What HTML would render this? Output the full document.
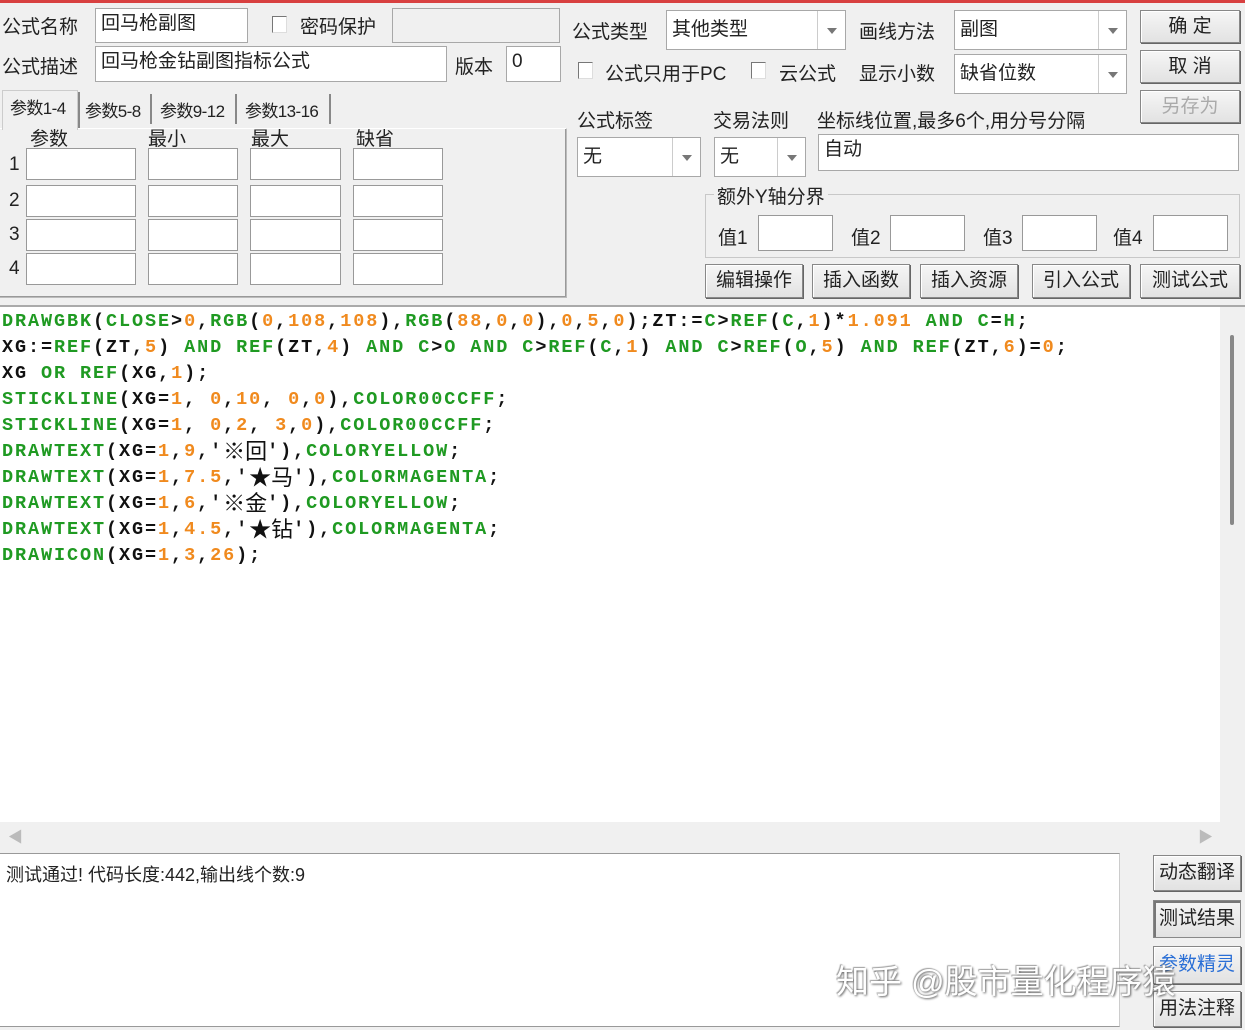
<!DOCTYPE html>
<html><head><meta charset="utf-8"><style>
*{box-sizing:border-box;margin:0;padding:0}
body{width:1245px;height:1030px;background:#f0f0f0;position:relative;overflow:hidden;font-family:"Liberation Sans","Noto Sans CJK SC",sans-serif;font-size:19px;color:#222}
.a{position:absolute;white-space:nowrap}
.in{position:absolute;background:#fff;border:1px solid #a8a8a8;font-size:19px;padding-left:5px;line-height:30px}
.dis{background:#f0f0f0}
.cb{position:absolute;width:15px;height:17px;border:1px solid #777;border-right-color:#ddd;border-bottom-color:#ddd;background:#fff}
.sel{position:absolute;background:#fff;border:1px solid #a8a8a8;font-size:19px;padding-left:5px}
.sel i{position:absolute;right:0;top:0;bottom:0;width:28px;border-left:1px solid #ccc}
.sel i:after{content:"";position:absolute;left:9px;top:50%;margin-top:-2px;border:5px solid transparent;border-top:6px solid #777}
.btn{position:absolute;border:1px solid #888;background:linear-gradient(#f6f6f6,#e2e2e2);box-shadow:inset 1px 1px 0 #fff, 1px 1px 0 #666;text-align:center;font-size:19px}
.pi{position:absolute;background:#fff;border:1px solid #999;width:110px;height:32px}
.code{position:absolute;left:2px;top:309px;font-family:"Liberation Mono",monospace;font-weight:bold;font-size:18.5px;letter-spacing:1.9px;color:#111;white-space:pre}
.code div{height:26px;line-height:26px;overflow:visible}
.g{color:#1f9a22}.o{color:#f08a1e}
.cj{font-family:"Noto Sans CJK SC",sans-serif;font-weight:normal;font-size:22px;letter-spacing:0;color:#111;line-height:20px;display:inline-block;vertical-align:-3px;height:20px}
.tab{position:absolute;top:97px;font-size:17px;letter-spacing:-0.6px}
.sep{position:absolute;top:94px;width:2px;height:30px;background:#888}
</style></head><body>
<div class="a" style="left:0;top:0;width:1245px;height:3px;background:#d84040"></div>
<div class="a" style="left:2px;top:12px">公式名称</div>
<div class="in" style="left:95px;top:8px;width:153px;height:35px">回马枪副图</div>
<div class="cb" style="left:272px;top:16px"></div>
<div class="a" style="left:300px;top:12px">密码保护</div>
<div class="in dis" style="left:392px;top:8px;width:168px;height:35px"></div>
<div class="a" style="left:2px;top:52px">公式描述</div>
<div class="in" style="left:95px;top:46px;width:352px;height:36px">回马枪金钻副图指标公式</div>
<div class="a" style="left:455px;top:52px">版本</div>
<div class="in" style="left:506px;top:46px;width:55px;height:36px">0</div>

<div class="a" style="left:572px;top:17px">公式类型</div>
<div class="sel" style="left:666px;top:10px;width:180px;height:40px;line-height:38px">其他类型<i></i></div>
<div class="a" style="left:859px;top:17px">画线方法</div>
<div class="sel" style="left:954px;top:10px;width:173px;height:40px;line-height:38px">副图<i></i></div>
<div class="cb" style="left:578px;top:62px"></div>
<div class="a" style="left:605px;top:59px">公式只用于PC</div>
<div class="cb" style="left:751px;top:62px"></div>
<div class="a" style="left:779px;top:59px">云公式</div>
<div class="a" style="left:859px;top:59px">显示小数</div>
<div class="sel" style="left:954px;top:54px;width:173px;height:40px;line-height:38px">缺省位数<i></i></div>
<div class="btn" style="left:1140px;top:10px;width:100px;height:33px;line-height:31px">确 定</div>
<div class="btn" style="left:1140px;top:50px;width:100px;height:33px;line-height:31px">取 消</div>
<div class="btn" style="left:1140px;top:90px;width:100px;height:33px;line-height:31px;color:#aaa">另存为</div>

<!-- tabs -->
<div class="a" style="left:0;top:128px;width:567px;height:170px;border:1px solid #bbb;border-left:none;border-top:1px solid #fff;box-shadow:inset -1px -1px 0 #999"></div>
<div class="a" style="left:2px;top:90px;width:76px;height:40px;border:1px solid #ccc;border-bottom:none;background:#f0f0f0"></div>
<div class="tab" style="left:10px;top:94px">参数1-4</div>
<div class="sep" style="left:78px;top:92px;height:36px"></div>
<div class="tab" style="left:85px">参数5-8</div>
<div class="sep" style="left:150px"></div>
<div class="tab" style="left:160px">参数9-12</div>
<div class="sep" style="left:235px"></div>
<div class="tab" style="left:245px">参数13-16</div>
<div class="sep" style="left:329px"></div>
<div class="a" style="left:30px;top:124px">参数</div>
<div class="a" style="left:148px;top:124px">最小</div>
<div class="a" style="left:251px;top:124px">最大</div>
<div class="a" style="left:356px;top:124px">缺省</div>
<div class="a" style="left:9px;top:154px">1</div><div class="a" style="left:9px;top:190px">2</div><div class="a" style="left:9px;top:224px">3</div><div class="a" style="left:9px;top:258px">4</div>
<div class="pi" style="left:26px;top:148px"></div><div class="pi" style="left:148px;top:148px;width:90px"></div><div class="pi" style="left:250px;top:148px;width:91px"></div><div class="pi" style="left:353px;top:148px;width:90px"></div>
<div class="pi" style="left:26px;top:185px"></div><div class="pi" style="left:148px;top:185px;width:90px"></div><div class="pi" style="left:250px;top:185px;width:91px"></div><div class="pi" style="left:353px;top:185px;width:90px"></div>
<div class="pi" style="left:26px;top:219px"></div><div class="pi" style="left:148px;top:219px;width:90px"></div><div class="pi" style="left:250px;top:219px;width:91px"></div><div class="pi" style="left:353px;top:219px;width:90px"></div>
<div class="pi" style="left:26px;top:253px"></div><div class="pi" style="left:148px;top:253px;width:90px"></div><div class="pi" style="left:250px;top:253px;width:91px"></div><div class="pi" style="left:353px;top:253px;width:90px"></div>

<div class="a" style="left:577px;top:106px">公式标签</div>
<div class="sel" style="left:577px;top:137px;width:124px;height:40px;line-height:38px">无<i></i></div>
<div class="a" style="left:713px;top:106px">交易法则</div>
<div class="sel" style="left:714px;top:137px;width:92px;height:40px;line-height:38px">无<i></i></div>
<div class="a" style="left:817px;top:106px">坐标线位置,最多6个,用分号分隔</div>
<div class="in" style="left:818px;top:134px;width:421px;height:37px">自动</div>
<div class="a" style="left:705px;top:194px;width:535px;height:64px;border:1px solid #c8c8c8"></div>
<div class="a" style="left:714px;top:182px;background:#f0f0f0;padding:0 3px">额外Y轴分界</div>
<div class="a" style="left:718px;top:223px">值1</div><div class="pi" style="left:758px;top:215px;width:75px;height:36px"></div>
<div class="a" style="left:851px;top:223px">值2</div><div class="pi" style="left:890px;top:215px;width:75px;height:36px"></div>
<div class="a" style="left:983px;top:223px">值3</div><div class="pi" style="left:1022px;top:215px;width:75px;height:36px"></div>
<div class="a" style="left:1113px;top:223px">值4</div><div class="pi" style="left:1153px;top:215px;width:75px;height:36px"></div>
<div class="btn" style="left:705px;top:264px;width:98px;height:34px;line-height:32px">编辑操作</div>
<div class="btn" style="left:812px;top:264px;width:98px;height:34px;line-height:32px">插入函数</div>
<div class="btn" style="left:920px;top:264px;width:98px;height:34px;line-height:32px">插入资源</div>
<div class="btn" style="left:1032px;top:264px;width:98px;height:34px;line-height:32px">引入公式</div>
<div class="btn" style="left:1140px;top:264px;width:100px;height:34px;line-height:32px">测试公式</div>

<!-- code -->
<div class="a" style="left:0;top:305px;width:1245px;height:2px;background:#aaa"></div>
<div class="a" style="left:0;top:307px;width:1220px;height:515px;background:#fff"></div>
<div class="a" style="left:1230px;top:335px;width:4px;height:190px;background:#888;border-radius:2px"></div>
<div class="a" style="left:0;top:822px;width:1220px;height:27px;background:#f0f0f0"></div>
<div class="a" style="left:8px;top:826px;color:#bbb;font-size:15px">◀</div>
<div class="a" style="left:1198px;top:826px;color:#bbb;font-size:15px">▶</div>
<div class="code"><div><span class="g">DRAWGBK</span>(<span class="g">CLOSE</span>&gt;<span class="o">0</span>,<span class="g">RGB</span>(<span class="o">0</span>,<span class="o">108</span>,<span class="o">108</span>),<span class="g">RGB</span>(<span class="o">88</span>,<span class="o">0</span>,<span class="o">0</span>),<span class="o">0</span>,<span class="o">5</span>,<span class="o">0</span>);ZT:=<span class="g">C</span>&gt;<span class="g">REF</span>(<span class="g">C</span>,<span class="o">1</span>)*<span class="o">1.091</span> <span class="g">AND</span> <span class="g">C</span>=<span class="g">H</span>;</div><div>XG:=<span class="g">REF</span>(ZT,<span class="o">5</span>) <span class="g">AND</span> <span class="g">REF</span>(ZT,<span class="o">4</span>) <span class="g">AND</span> <span class="g">C</span>&gt;<span class="g">O</span> <span class="g">AND</span> <span class="g">C</span>&gt;<span class="g">REF</span>(<span class="g">C</span>,<span class="o">1</span>) <span class="g">AND</span> <span class="g">C</span>&gt;<span class="g">REF</span>(<span class="g">O</span>,<span class="o">5</span>) <span class="g">AND</span> <span class="g">REF</span>(ZT,<span class="o">6</span>)=<span class="o">0</span>;</div><div>XG <span class="g">OR</span> <span class="g">REF</span>(XG,<span class="o">1</span>);</div><div><span class="g">STICKLINE</span>(XG=<span class="o">1</span>, <span class="o">0</span>,<span class="o">10</span>, <span class="o">0</span>,<span class="o">0</span>),<span class="g">COLOR00CCFF</span>;</div><div><span class="g">STICKLINE</span>(XG=<span class="o">1</span>, <span class="o">0</span>,<span class="o">2</span>, <span class="o">3</span>,<span class="o">0</span>),<span class="g">COLOR00CCFF</span>;</div><div><span class="g">DRAWTEXT</span>(XG=<span class="o">1</span>,<span class="o">9</span>,'<span class="cj">※回</span>'),<span class="g">COLORYELLOW</span>;</div><div><span class="g">DRAWTEXT</span>(XG=<span class="o">1</span>,<span class="o">7.5</span>,'<span class="cj">★马</span>'),<span class="g">COLORMAGENTA</span>;</div><div><span class="g">DRAWTEXT</span>(XG=<span class="o">1</span>,<span class="o">6</span>,'<span class="cj">※金</span>'),<span class="g">COLORYELLOW</span>;</div><div><span class="g">DRAWTEXT</span>(XG=<span class="o">1</span>,<span class="o">4.5</span>,'<span class="cj">★钻</span>'),<span class="g">COLORMAGENTA</span>;</div><div><span class="g">DRAWICON</span>(XG=<span class="o">1</span>,<span class="o">3</span>,<span class="o">26</span>);</div></div>

<!-- output -->
<div class="a" style="left:0;top:853px;width:1120px;height:174px;background:#fff;border-top:1px solid #999;border-right:1px solid #ccc;border-bottom:1px solid #999"></div>
<div class="a" style="left:6px;top:861px;font-size:18px">测试通过! 代码长度:442,输出线个数:9</div>
<div class="btn" style="left:1153px;top:855px;width:88px;height:36px;line-height:34px">动态翻译</div>
<div class="btn" style="left:1153px;top:900px;width:88px;height:38px;line-height:36px;box-shadow:inset 2px 2px 0 #777">测试结果</div>
<div class="btn" style="left:1153px;top:946px;width:88px;height:38px;line-height:36px;color:#2a6fd6">参数精灵</div>
<div class="btn" style="left:1153px;top:991px;width:88px;height:36px;line-height:34px">用法注释</div>
<div class="a" style="left:836px;top:955px;font-size:33px;color:#fff;text-shadow:1px 1px 2px #555,-1px -1px 1px #999;opacity:.9">知乎 @股市量化程序猿</div>
</body></html>
